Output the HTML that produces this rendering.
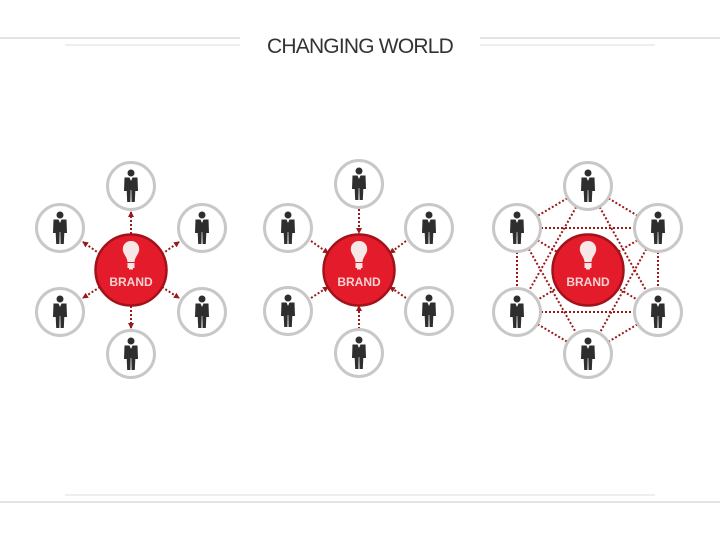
<!DOCTYPE html>
<html><head><style>
html,body{margin:0;padding:0;background:#fff;width:720px;height:540px;overflow:hidden}
svg{display:block}
.bt{font-family:"Liberation Sans",sans-serif;font-weight:bold;font-size:12px;fill:#f6d3d3}
</style></head><body>
<svg width="720" height="540" viewBox="0 0 720 540" xmlns="http://www.w3.org/2000/svg">
<defs>
<g id="p">
<circle r="23.5" fill="#fff" stroke="#c8c8c8" stroke-width="3"/>
<circle cx="0" cy="-13" r="3.5" fill="#2e2e2e"/>
<path d="M-6.5,-8.5 L6.5,-8.5 L7,5 L4.3,5 L3.8,16 L0.6,16 L0.3,4 L-0.3,4 L-0.6,16 L-3.8,16 L-4.3,5 L-7,5 Z" fill="#2e2e2e"/>
<path d="M-1.5,-8.5 L0,-5 L1.5,-8.5 Z" fill="#fff"/>
</g>
<g id="b">
<circle r="35.5" fill="#e31b2a" stroke="#a3121b" stroke-width="2.5"/>
<path d="M0,-29 C-6,-29 -9,-24 -8,-19 C-7,-15 -4,-13 -3.5,-8 L3.5,-8 C4,-13 7,-15 8,-19 C9,-24 6,-29 0,-29 Z" fill="#f7e7e7"/>
<rect x="-3.5" y="-7" width="7" height="5" fill="#f7e7e7"/>
<rect x="-2" y="-2" width="4" height="1.5" fill="#f7e7e7"/>
<text x="0" y="16" text-anchor="middle" class="bt">BRAND</text>
</g>
<marker id="ah" markerWidth="6" markerHeight="6" refX="5" refY="3" orient="auto" markerUnits="userSpaceOnUse">
<path d="M0,0 L6,3 L0,6 Z" fill="#9a1a1a"/>
</marker>
</defs>
<line x1="0" y1="38" x2="240" y2="38" stroke="#dcdcdc" stroke-width="1.5"/>
<line x1="480" y1="38" x2="720" y2="38" stroke="#dcdcdc" stroke-width="1.5"/>
<line x1="65" y1="45" x2="240" y2="45" stroke="#dcdcdc" stroke-width="1"/>
<line x1="480" y1="45" x2="655" y2="45" stroke="#dcdcdc" stroke-width="1"/>
<text x="360" y="53" text-anchor="middle" style="font-family:'Liberation Sans',sans-serif;font-size:21px;fill:#333;letter-spacing:-0.8px">CHANGING WORLD</text>
<line x1="65" y1="495" x2="655" y2="495" stroke="#dcdcdc" stroke-width="1"/>
<line x1="0" y1="502" x2="720" y2="502" stroke="#dcdcdc" stroke-width="1.5"/>

<g stroke="#9a1a1a" stroke-width="2" stroke-dasharray="2,2" fill="none">
<line x1="131" y1="234" x2="131" y2="212" marker-end="url(#ah)"/>
<line x1="131" y1="306" x2="131" y2="328" marker-end="url(#ah)"/>
<line x1="100" y1="254" x2="83" y2="242" marker-end="url(#ah)"/>
<line x1="162" y1="254" x2="179" y2="242" marker-end="url(#ah)"/>
<line x1="100" y1="287" x2="83" y2="298" marker-end="url(#ah)"/>
<line x1="162" y1="287" x2="179" y2="298" marker-end="url(#ah)"/>
<line x1="359" y1="209" x2="359" y2="233" marker-end="url(#ah)"/>
<line x1="359" y1="329" x2="359" y2="306" marker-end="url(#ah)"/>
<line x1="311" y1="241" x2="328" y2="253" marker-end="url(#ah)"/>
<line x1="406" y1="241" x2="390" y2="253" marker-end="url(#ah)"/>
<line x1="311" y1="298" x2="328" y2="287" marker-end="url(#ah)"/>
<line x1="406" y1="298" x2="390" y2="287" marker-end="url(#ah)"/>
<path d="M588,186 L517,228 M588,186 L658,228 M588,186 L517,312 M588,186 L658,312
M517,228 L658,228 M517,228 L517,312 M517,228 L658,312 M517,228 L588,354
M658,228 L517,312 M658,228 L658,312 M658,228 L588,354
M517,312 L658,312 M517,312 L588,354 M658,312 L588,354"/>
</g>

<use href="#b" x="131" y="270"/>
<use href="#p" x="131" y="186"/><use href="#p" x="131" y="354"/>
<use href="#p" x="60" y="228"/><use href="#p" x="202" y="228"/>
<use href="#p" x="60" y="312"/><use href="#p" x="202" y="312"/>

<use href="#b" x="359" y="270"/>
<use href="#p" x="359" y="184"/><use href="#p" x="359" y="353"/>
<use href="#p" x="288" y="228"/><use href="#p" x="429" y="228"/>
<use href="#p" x="288" y="311"/><use href="#p" x="429" y="311"/>

<use href="#b" x="588" y="270"/>
<use href="#p" x="588" y="186"/><use href="#p" x="588" y="354"/>
<use href="#p" x="517" y="228"/><use href="#p" x="658" y="228"/>
<use href="#p" x="517" y="312"/><use href="#p" x="658" y="312"/>
</svg>
</body></html>
